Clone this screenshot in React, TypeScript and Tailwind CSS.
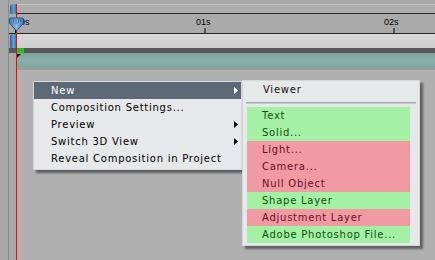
const mainItems = [
  { label: "New", sub: true, active: true },
  { label: "Composition Settings...", sub: false, active: false },
  { label: "Preview", sub: true, active: false },
  { label: "Switch 3D View", sub: true, active: false },
  { label: "Reveal Composition in Project", sub: false, active: false },
]

const newItems = [
  { label: "Text", ok: true },
  { label: "Solid...", ok: true },
  { label: "Light...", ok: false },
  { label: "Camera...", ok: false },
  { label: "Null Object", ok: false },
  { label: "Shape Layer", ok: true },
  { label: "Adjustment Layer", ok: false },
  { label: "Adobe Photoshop File...", ok: true },
]

function Arrow({ light }: { light: boolean }) {
  return (
    <svg width="4" height="7" viewBox="0 0 4 7">
      <path d="M0 0 L4 3.5 L0 7 Z" fill={light ? "#ffffff" : "#000000"} />
    </svg>
  )
}

function Handle({ h }: { h: string }) {
  return (
    <div
      className={`ml-[1px] w-[6px] ${h} rounded-tl-[3px] rounded-bl-[1px] bg-[linear-gradient(90deg,#2a5f9c,#6f9fd0_60%,#3d74b0)]`}
    />
  )
}

function Playhead() {
  return (
    <svg width="15" height="15" viewBox="0 0 15 15" className="absolute left-[9px] top-[17px]">
      <defs>
        <linearGradient id="ph" x1="0" y1="0" x2="1" y2="0">
          <stop offset="0" stopColor="#3f78b6" />
          <stop offset="0.5" stopColor="#8db6e0" />
          <stop offset="1" stopColor="#3f78b6" />
        </linearGradient>
      </defs>
      <path d="M1.5 1 H13.5 Q14.5 1 14.5 2 V6 L7.5 14 L0.5 6 V2 Q0.5 1 1.5 1 Z" fill="url(#ph)" stroke="#1f5188" strokeWidth="1" />
      <path d="M4.5 2 V6 M7 2 V7 M9.5 2 V6 M11.5 2 V5" stroke="#2c64a3" strokeWidth="0.8" />
    </svg>
  )
}

export default function App() {
  return (
    <div className="relative w-[435px] h-[260px] overflow-hidden bg-[#b0b0b0] font-['DejaVu_Sans',sans-serif]">
      <div className="flex h-full">
        <div className="w-[9px] h-full bg-[#a9a9a9] border-r border-[#8a8a8a]" />

        <div className="flex-1 flex flex-col">
          {/* range bar */}
          <div className="flex h-[14px]">
            <div className="w-[7px] bg-[#a9a9a9] pt-[4px]">
              <Handle h="h-[10px]" />
            </div>
            <div className="flex-1 flex flex-col">
              <div className="h-[4px] bg-[#a9a9a9]" />
              <div className="h-[1px] bg-[#c6c6c6]" />
              <div className="h-[8px] bg-[#adadad]" />
              <div className="h-[1px] bg-[#2a2a2a]" />
            </div>
          </div>

          {/* ruler */}
          <div className="relative h-[20px] bg-[#aaaaaa] border-b border-[#262626] text-[9px] leading-none text-black font-['Liberation_Sans',sans-serif]">
            <span className="absolute left-[11px] top-[4px]">0s</span>
            <span className="absolute left-[187px] top-[4px]">01s</span>
            <div className="absolute left-[195px] top-[14px] w-[2px] h-[5px] bg-[#555]" />
            <span className="absolute left-[375px] top-[4px]">02s</span>
            <div className="absolute left-[384px] top-[14px] w-[2px] h-[5px] bg-[#555]" />
          </div>

          {/* work area */}
          <div className="flex h-[14px]">
            <div className="w-[7px] bg-[#a9a9a9]">
              <Handle h="h-[14px]" />
            </div>
            <div className="flex-1 bg-[linear-gradient(180deg,#d8d8d8,#cfcfcf)]" />
          </div>

          <div className="flex h-[5px] bg-[#575757]">
            <div className="w-[8px]" />
            <div className="w-[7px] bg-[#22c322]" />
          </div>

          {/* layer bar */}
          <div className="flex h-[15px]">
            <div className="w-[8px] bg-[#aaaaaa]" />
            <div className="relative flex-1 bg-[linear-gradient(180deg,#7aa29b,#8ab0a9_50%,#7ea69f)]">
              <svg width="4" height="4" viewBox="0 0 4 4" className="absolute left-0 top-[1px]">
                <path d="M0 0 H4 L0 4 Z" fill="#111" />
              </svg>
            </div>
          </div>
          <div className="flex h-[2px]">
            <div className="w-[7px] bg-[#aaaaaa]" />
            <div className="flex-1 bg-[#9c9c9c]" />
          </div>
          <div className="flex flex-1">
            <div className="w-[7px] bg-[#aaaaaa]" />
            <div className="flex-1" />
          </div>
        </div>
      </div>

      {/* current time indicator */}
      <div className="absolute left-[16px] top-[4px] bottom-0 w-[1px] bg-[#ff0000]" />
      <div className="absolute left-[15px] top-[24px] w-[1px] h-[9px] bg-black" />
      <Playhead />

      {/* context menu */}
      <div className="absolute left-[33px] top-[81px] w-[209px] h-[89px] bg-[#e7e8ea] border border-[#d4d6da] shadow-[3px_3px_2px_rgba(0,0,0,0.45)] text-[10px] tracking-[0.75px]">
        {mainItems.map((item) => (
          <div
            key={item.label}
            className={`flex items-center justify-between h-[17px] pl-[17px] pr-[3px] ${
              item.active ? "bg-[#5e6977] text-white" : "text-black"
            }`}
          >
            <span>{item.label}</span>
            {item.sub && <Arrow light={item.active} />}
          </div>
        ))}
      </div>

      {/* submenu */}
      <div className="absolute left-[242px] top-[80px] w-[178px] h-[166px] bg-[#e7e8ea] border border-[#d4d6da] shadow-[3px_3px_2px_rgba(0,0,0,0.45)] text-[10px] tracking-[0.75px]">
        <div className="flex items-center h-[17px] pl-[20px] text-[#111]">Viewer</div>
        <div className="mt-[4px] mx-[3px] h-[2px] border-t border-[#a3a8b0] border-b border-b-[#c4c7cc]" />
        <div className="mt-[3px] ml-[4px] mr-[9px]">
          {newItems.map((item) => (
            <div
              key={item.label}
              className={`flex items-center h-[17px] pl-[15px] ${
                item.ok ? "bg-[#a4f0a4] text-[#0f520f]" : "bg-[#f19aa3] text-[#6a0f22]"
              }`}
            >
              {item.label}
            </div>
          ))}
        </div>
      </div>
    </div>
  )
}
